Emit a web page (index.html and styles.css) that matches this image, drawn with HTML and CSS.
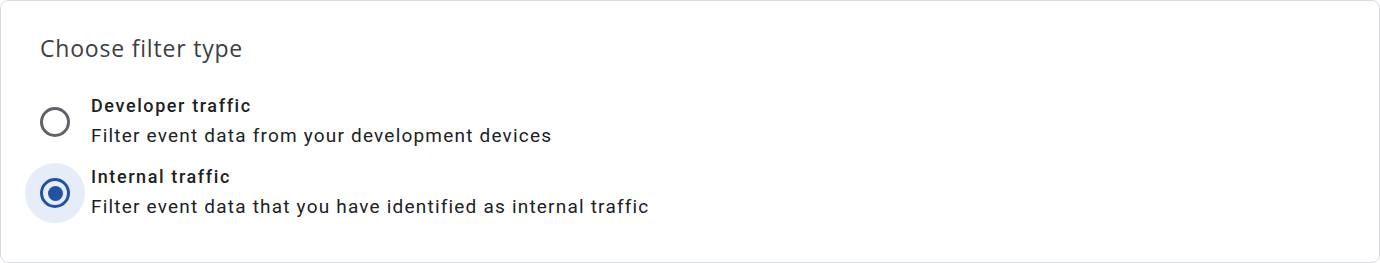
FILE: index.html
```html
<!DOCTYPE html>
<html>
<head>
<meta charset="utf-8">
<link rel="stylesheet" href="styles.css">
</head>
<body>
<div class="card">
  <h2 class="card-title">Choose filter type</h2>
  <div class="options">
    <label class="option">
      <span class="radio-wrap"><span class="radio"></span></span>
      <span class="option-text">
        <span class="option-label">Developer traffic</span>
        <span class="option-desc">Filter event data from your development devices</span>
      </span>
    </label>
    <label class="option">
      <span class="radio-wrap is-checked"><span class="radio checked"><span class="dot"></span></span></span>
      <span class="option-text">
        <span class="option-label">Internal traffic</span>
        <span class="option-desc">Filter event data that you have identified as internal traffic</span>
      </span>
    </label>
  </div>
</div>
</body>
</html>
```
FILE: styles.css
```css
html, body {
  margin: 0;
  padding: 0;
  background: #ffffff;
}
body {
  font-family: Roboto, "Liberation Sans", sans-serif;
  color: #202124;
}
.card {
  box-sizing: border-box;
  width: 1380px;
  height: 263px;
  border: 1px solid #dadce0;
  border-radius: 8px;
  background: #fff;
  padding: 33px 24px 0 24px;
}
.card-title {
  margin: 0 0 0 15px;
  font-family: "Open Sans", Roboto, sans-serif;
  font-weight: 400;
  font-size: 23px;
  letter-spacing: 0.8px;
  line-height: 28px;
  color: #3c4043;
}
.options {
  margin-top: 30px;
  display: flex;
  flex-direction: column;
  gap: 11px;
}
.option {
  display: flex;
  align-items: flex-start;
  gap: 6px;
}
.radio-wrap {
  width: 60px;
  height: 60px;
  border-radius: 50%;
  display: flex;
  align-items: center;
  justify-content: center;
  flex: none;
}
.radio-wrap.is-checked {
  background: #e6edf9;
}
.radio {
  box-sizing: border-box;
  width: 30px;
  height: 30px;
  border-radius: 50%;
  border: 3px solid #5f6368;
  display: flex;
  align-items: center;
  justify-content: center;
}
.radio.checked {
  border-color: #2451a3;
}
.dot {
  width: 15px;
  height: 15px;
  border-radius: 50%;
  background: #2451a3;
}
.option-text {
  display: flex;
  flex-direction: column;
  margin-top: -1px;
}
.option-label {
  font-size: 18px;
  font-weight: 500;
  letter-spacing: 1.6px;
  line-height: 30px;
  color: #202124;
}
.option-desc {
  font-size: 19px;
  letter-spacing: 1.2px;
  line-height: 30px;
  color: #202124;
}
```
